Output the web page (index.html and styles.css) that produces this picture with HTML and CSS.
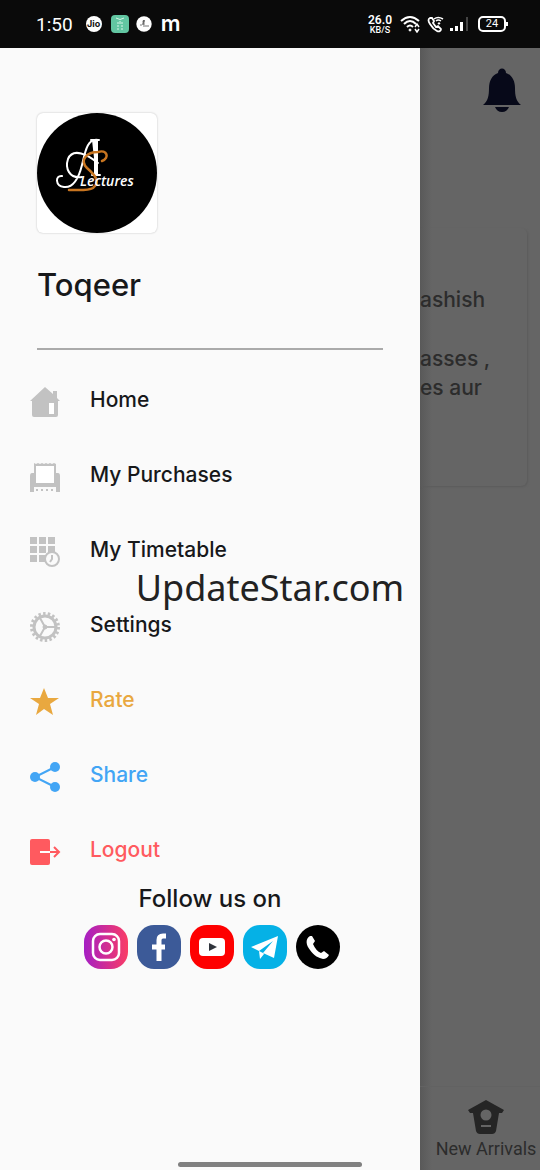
FILE: index.html
```html
<!DOCTYPE html>
<html lang="en">
<head>
<meta charset="utf-8">
<meta name="viewport" content="width=device-width, initial-scale=1">
<title>AS Lectures</title>
<link rel="stylesheet" href="styles.css">
</head>
<body>
<header class="status">
  <span class="time">1:50</span>
  <span class="jio">Jio</span>
  <svg class="note" viewBox="0 0 18 18" width="18" height="18"><rect width="18" height="18" rx="4" fill="#62c6a2"/><path d="M5 3q4 3 8 0M9 6v3M6 8h2m2 0h2M6 11h2m2 0h2M6 14h2m2 0h2" fill="none" stroke="#d9f5ea" stroke-width="1"/></svg>
  <svg class="mini" viewBox="0 0 16 16" width="16" height="16"><circle cx="8" cy="8" r="7.700" fill="#fff"/><path d="M4 9q3 1 4-5v5M9 5q-3-1-2 1t0 3M7 10h6" fill="none" stroke="#555" stroke-width=".8"/></svg>
  <span class="brand">m</span>
  <span class="speed"><b>26.0</b><small>KB/S</small></span>
  <svg viewBox="0 0 22 18" width="22" height="18" fill="none" stroke="#fff" stroke-width="2"><path d="M1 6q9-8 18 0M4 9q6-6 12 0M7 12q3-3 6 0"/><circle cx="10" cy="15" r="1" fill="#fff" stroke-width="1"/><path d="m15 12 2-3 2 3m-4 2 2 3 2-3" stroke-width="1.500"/></svg>
  <svg viewBox="0 0 17 18" width="17" height="18" fill="none" stroke="#fff"><path d="M3 3C1 4 1 6 3 9q3 5 7 7c2 1 4 0 4-2l-3-3-2 1-3-4 1-2-2-3z" stroke-width="1.800"/><path d="M7 4q4-3 9 0M9 6q2-2 5 0M11 9l1-1 1 1" stroke-width="1.500"/></svg>
  <svg viewBox="0 0 20 18" width="20" height="18"><path d="M1 13h3v3H1zm5-2h3v5H6zm5-4h3v9h-3z" fill="#fff"/><path d="M17 2h2v14h-2z" fill="#444"/></svg>
  <span class="battery">24</span>
</header>

<div class="stage">
  <aside class="drawer">
    <div class="avatar">
      <svg viewBox="0 0 120 120" role="img" aria-label="AS Lectures">
        <circle cx="60" cy="60" r="60" fill="#000"/>
        <g fill="none" stroke="#fff" stroke-width="2" stroke-linecap="round">
          <path d="M61 27C50 25 48 40 45 52C41 68 35 75 27 74C18 73 18 62 25 63M45 64C32 66 28 55 31 46C36 34 51 42 61 50"/>
          <path d="M54 27H62M55 62H63"/>
        </g>
        <path d="M55 27h6v35h-4V45z" fill="#fff"/>
        <path d="M65 48C73 45 70 36 61 39C50 39 42 47 50 55C58 62 64 69 56 75C51 78 43 77 32 77" fill="none" stroke="#c87520" stroke-width="2.500" stroke-linecap="round"/>
        <text class="logo-text" x="43" y="73">Lectures</text>
      </svg>
    </div>
    <h1 class="name">Toqeer</h1>
    <nav class="menu">
      <a href="#home"><svg viewBox="0 0 30 30"><path d="M15 0 23 7V4h4v7l3 3h-2v14q0 2-2 2H4q-2 0-2-2V14H0z" fill="#c2c2c2"/><path d="M19 16h5v11h-5z" fill="#fff"/></svg><span>Home</span></a>
      <a href="#purchases"><svg viewBox="0 0 30 30"><path d="M4 1l2 1 2-1 2 1 2-1 2 1 2-1 2 1 2-1 2 1 2-1 2 1v9h2q2 0 2 3v16h-4v-5H4v5H0V14q0-3 2-3h2z" fill="#c2c2c2"/><path d="M6 4h18v17H6z" fill="#fff"/><path d="M6 28h2m3 0h2m3 0h2m3 0h2" stroke="#c2c2c2" stroke-width="2"/></svg><span>My Purchases</span></a>
      <a href="#timetable"><svg viewBox="0 0 30 30"><path d="M0 0h7v7H0zm9 0h7v7H9zm9 0h7v7h-7zM0 9h7v7H0zm9 0h7v7H9zm9 0h7v7h-7zM0 18h7v7H0zm9 0h7v7H9z" fill="#c2c2c2"/><circle cx="22" cy="22" r="7" fill="#fafafa" stroke="#c2c2c2" stroke-width="2"/><path d="M22 18v4l-2 3" fill="none" stroke="#c2c2c2" stroke-width="2"/></svg><span>My Timetable</span></a>
      <a href="#settings"><svg viewBox="0 0 30 30" fill="none" stroke="#c2c2c2"><circle cx="15" cy="15" r="13.500" stroke-width="3" stroke-dasharray="2.500 2.213"/><circle cx="15" cy="15" r="11" stroke-width="3"/><path d="M15 15h10M15 15l-5-9M15 15l-5 9" stroke-width="2"/><circle cx="15" cy="15" r="2" fill="#c2c2c2"/></svg><span>Settings</span></a>
      <a class="rate" href="#rate"><svg viewBox="0 0 30 30"><path d="m14 1 4 10h11l-9 6 3 11-9-6-8 6 3-11-9-6h10z" fill="currentColor"/></svg><span>Rate</span></a>
      <a class="share" href="#share"><svg viewBox="0 0 30 30" fill="currentColor"><path d="M25 5 5 15l20 10" fill="none" stroke="currentColor" stroke-width="2"/><circle cx="5" cy="15" r="5"/><circle cx="25" cy="5" r="5"/><circle cx="25" cy="25" r="5"/></svg><span>Share</span></a>
      <a class="logout" href="#logout"><svg viewBox="0 0 30 30"><path d="M2 2h16q2 0 2 2v22q0 2-2 2H2q-2 0-2-2V4q0-2 2-2z" fill="currentColor"/><path d="M10 15h10" stroke="#fff" stroke-width="2"/><path d="M20 15h9m-5-5 5 5-5 5" fill="none" stroke="currentColor" stroke-width="2"/></svg><span>Logout</span></a>
    </nav>
    <h2 class="follow">Follow us on</h2>
    <div class="social">
      <a href="#instagram" aria-label="Instagram"><svg viewBox="0 0 44 44"><defs><linearGradient id="ig"><stop stop-color="#a51fc4"/><stop offset="1" stop-color="#fa3c65"/></linearGradient></defs><rect width="44" height="44" rx="17" fill="url(#ig)"/><g fill="none" stroke="#fff" stroke-width="2.500"><rect x="9" y="9" width="26" height="26" rx="7"/><circle cx="22" cy="22" r="6.500"/></g><circle cx="30" cy="14.500" r="1.800" fill="#fff"/></svg></a>
      <a href="#facebook" aria-label="Facebook"><svg viewBox="0 0 44 44"><rect width="44" height="44" rx="17" fill="#3c5a98"/><path d="M29 11h-3q-4 0-4 4v21M15 22h13" fill="none" stroke="#fff" stroke-width="5"/></svg></a>
      <a href="#youtube" aria-label="YouTube"><svg viewBox="0 0 44 44"><rect width="44" height="44" rx="17" fill="#fe0000"/><rect x="9" y="13" width="26" height="18" rx="4" fill="#fff"/><path d="m19 18 8 4-8 4z" fill="#30343c"/></svg></a>
      <a href="#telegram" aria-label="Telegram"><svg viewBox="0 0 44 44"><rect width="44" height="44" rx="17" fill="#05b1e6"/><path d="M35 11 8 22l8 4 14-10-10 12 11 5zM16 26l1 8 4-5-1-1z" fill="#fff"/></svg></a>
      <a href="#call" aria-label="Call"><svg viewBox="0 0 44 44"><circle cx="22" cy="22" r="22" fill="#000"/><path d="M14 11C9 14 10 20 14 25C18 31 23 33 27 34Q31 34 33 30L28 26 25 28Q20 26 17 19L19 16 16 11z" fill="#fff"/></svg></a>
    </div>
  </aside>

  <main class="page">
    <div class="appbar"><button class="bell" aria-label="Notifications"><svg viewBox="0 0 38 44" width="38" height="44" fill="#070919"><path d="M15 5c0-6 8-6 8 0 6 2 9 8 9 15 0 8 1 13 6 17H0c5-4 6-9 6-17C6 13 9 7 15 5zM12 39h14q-2 5-7 5t-7-5"/></svg></button></div>
    <section class="card"><p>ashish</p><p class="last">asses ,<br>es aur</p></section>
    <nav class="tabs"><a href="#new"><svg viewBox="0 0 36 34" width="36" height="34"><path d="m18 0 18 10-2 3h-3l-3 18q-1 3-4 3H12q-3 0-4-3L5 13H2l-2-3z" fill="#252525"/><circle cx="18" cy="15" r="5.500" fill="#656565"/><path d="M13 26h10" stroke="#656565" stroke-width="2"/></svg><span>New Arrivals</span></a></nav>
  </main>
  <div class="watermark">UpdateStar.com</div>
  <div class="gesture"></div>
</div>
</body>
</html>
```
FILE: styles.css
```css
* { box-sizing: border-box; }
body {
  margin: 0;
  min-height: 100vh;
  display: flex;
  flex-direction: column;
  font-family: Inter, "Noto Sans", sans-serif;
  font-weight: 500;
  color: #17181a;
  background: #fafafa;
}
h1, h2, p { margin: 0; font-weight: 500; }
a { color: inherit; text-decoration: none; }

.status {
  height: 48px;
  padding: 0 34px 0 36px;
  display: flex;
  align-items: center;
  color: #fff;
  background: #0a0a0a;
}
.time { font: 19px Roboto, sans-serif; margin-right: 13px; }
.jio {
  width: 16px;
  height: 16px;
  border-radius: 50%;
  background: #fff;
  color: #111;
  font: bold 9px/16px Inter, sans-serif;
  text-align: center;
}
.note { margin: 0 7px 0 9px; }
.brand { margin: 0 auto 0 9px; font: 600 22px/24px Inter, sans-serif; padding-bottom: 2px; }
.speed { display: flex; flex-direction: column; align-items: center; margin-right: 8px; }
.speed b { font: 600 12px/12px Roboto, sans-serif; }
.speed small { font: 500 9px/9px Roboto, sans-serif; }
.status .speed ~ svg { margin-right: 5px; }
.battery {
  position: relative;
  width: 28px;
  height: 16px;
  margin-left: 4px;
  border: 2px solid #fff;
  border-radius: 5px;
  font: 11px/12px Roboto, sans-serif;
  text-align: center;
}
.battery::after {
  content: "";
  position: absolute;
  right: -4px;
  top: 4px;
  width: 2px;
  height: 4px;
  background: #fff;
}

.stage { position: relative; flex: 1; display: flex; background: #656565; }
.drawer { flex: 1; min-width: 0; padding-top: 65px; background: #fafafa; }
.avatar {
  width: 120px;
  height: 120px;
  margin-left: 37px;
  border-radius: 6px;
  background: #fff;
  box-shadow: 0 0 2px #bbb;
}
.avatar svg { display: block; width: 120px; height: 120px; }
.logo-text { font: italic 600 14px "Open Sans", sans-serif; fill: #fff; }
.name {
  margin: 0 37px;
  padding: 32px 0 0;
  height: 117px;
  border-bottom: 2px solid #aaa;
  font-size: 31px;
  line-height: 40px;
}
.menu { padding-top: 12px; }
.menu a { height: 75px; padding-left: 30px; display: flex; align-items: center; gap: 30px; font-size: 21px; }
.menu svg { width: 30px; height: 30px; margin-top: 4px; overflow: visible; }
.menu .rate { color: #e9a83f; }
.menu .share { color: #42a5f5; }
.menu .logout { color: #ff5a5f; }
.follow { text-align: center; font-size: 24px; line-height: 28px; margin: -2px 0 12px; }
.social { display: flex; justify-content: center; gap: 9px; padding-left: 3px; }
.social a, .social svg { display: block; width: 44px; height: 44px; }

.page {
  width: 120px;
  display: flex;
  flex-direction: column;
  overflow: hidden;
  background: linear-gradient(90deg, #595959, #656565 12px);
}
.appbar { display: flex; justify-content: flex-end; padding: 20px 19px 0 0; height: 180px; }
.bell { width: 38px; height: 44px; padding: 0; border: 0; background: none; }
.card {
  height: 258px;
  margin-right: 13px;
  padding-top: 57px;
  border-radius: 0 6px 6px 0;
  box-shadow: 1px 1px 2px #5c5c5c;
  font-size: 21px;
  line-height: 29px;
  color: #2c2c2c;
}
.card .last { margin-top: 30px; }
.tabs { margin-top: auto; border-top: 1px solid #626262; padding: 13px 0 10px; }
.tabs a { display: flex; flex-direction: column; align-items: center; gap: 4px; padding-left: 12px; font: 18px/22px Roboto, sans-serif; color: #2c2c2c; white-space: nowrap; }
.watermark {
  position: absolute;
  inset: 512px 0 auto;
  text-align: center;
  font: 36px/56px "Noto Sans", sans-serif;
  color: #222;
}
.gesture {
  position: absolute;
  left: 33%;
  right: 33%;
  bottom: 3px;
  height: 5px;
  border-radius: 3px;
  background: #808080;
}
```
